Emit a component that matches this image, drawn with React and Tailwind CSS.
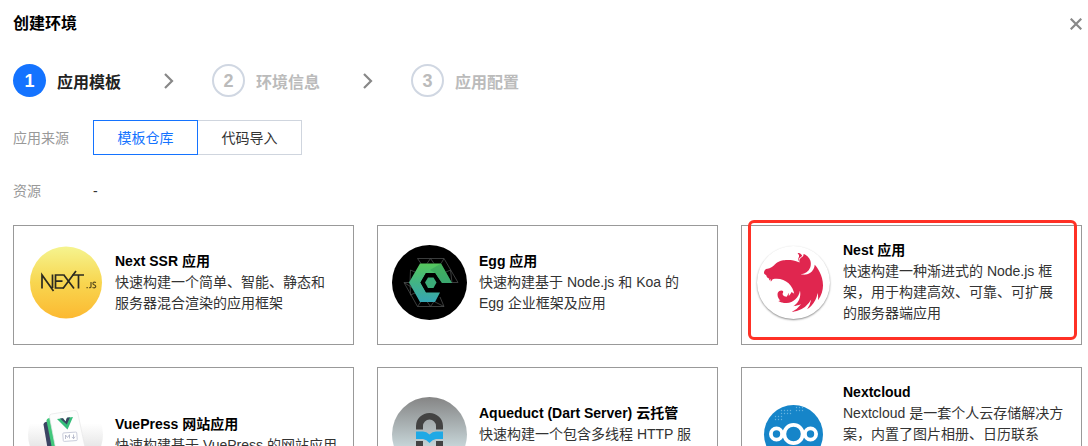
import React, { useState } from "react";
import { SiNestjs } from "react-icons/si";

function NextLogo() {
  return (
    <svg viewBox="0 0 75 75" className="size-[75px]" aria-hidden="true">
      <defs>
        <linearGradient id="next-bg" x1="0" y1="0" x2="0" y2="1">
          <stop offset="0" stopColor="#f5f48f" />
          <stop offset="0.5" stopColor="#f8d650" />
          <stop offset="1" stopColor="#fcb931" />
        </linearGradient>
      </defs>
      <circle cx="38" cy="37.500" r="36" fill="url(#next-bg)" />
      <g fill="none" stroke="#2b2a20" strokeWidth="1.7">
        <path d="M14 43.500V30L25.500 46M24.500 43V29.500" />
        <path d="M35.500 30H27.500V43H35.500M27.500 36.200H34.500" />
        <path d="M35.500 29.500L46 43.500M35 43.500L46.500 28L48 26" />
        <path d="M44.500 30H56M50.500 30V43.500" />
      </g>
      <g fill="none" stroke="#5a4c1c" strokeWidth="1.2">
        <path d="M58.500 42.600H59.800M63 37V41.500Q63 43 61 42.700M68 37.500Q64.800 36.500 64.900 38.500Q65 39.600 66.500 40Q68.200 40.800 67.500 42.200Q66.500 43.300 64.500 42.500" />
      </g>
    </svg>
  );
}

function EggLogo() {
  return (
    <svg viewBox="0 0 75 75" className="size-[75px]" aria-hidden="true">
      <defs>
        <linearGradient id="egg-fill" x1="0" y1="0" x2="0" y2="1">
          <stop offset="0" stopColor="#55c75c" />
          <stop offset="0.5" stopColor="#42b385" />
          <stop offset="1" stopColor="#36a6b4" />
        </linearGradient>
      </defs>
      <circle cx="37.500" cy="37.500" r="37.500" fill="#000" />
      <g fill="none" stroke="#4a4d4c" strokeWidth="0.8">
        <path d="M25.500 13.500H52L66 37.500H59M43 57L52 61.500H25.500L12 37.500Z" />
        <path d="M25.500 13.500L29 18.500M52 13.500L49 18.500M38.500 13.500L35 18.500M38.500 13.500L42 18.500M12 37.500H17M25.500 61.500L29 56.500M52 61.500L48 52M38.500 61.500L35 56.500M38.500 61.500L42 56.500M58.500 25L54 27M18.500 25L23 27M18.500 50L23 48M18.500 25L18 37L18.500 50M58.500 25L60 37.500" />
      </g>
      <path d="M28 18.500H49L60 38H50L43 28H34L28.500 37.500L34 47.500H48L43 57H28L17 37.500Z" fill="url(#egg-fill)" />
      <path d="M49 18.500L60 38H50L43 28L38 25Z" fill="#319a58" opacity="0.5" />
      <path d="M28.500 37.500L34 28H43L48.500 37.500L43 47H34Z" fill="#000" />
      <path d="M33 37.500L36 32.500H41.500L44.500 37.500L41.500 43H36Z" fill="#3bab78" />
    </svg>
  );
}

function NestLogo() {
  return (
    <span className="flex size-[75px] items-center justify-center">
      <span className="flex size-[73px] items-center justify-center rounded-full bg-white shadow-[0_1px_2px_rgba(0,0,0,0.45)]">
        <SiNestjs className="size-[59px] text-[#e0264f]" aria-hidden="true" />
      </span>
    </span>
  );
}

function VuePressLogo() {
  return (
    <svg viewBox="0 0 75 75" className="size-[75px]" aria-hidden="true">
      <defs>
        <linearGradient id="vue-bg" x1="0" y1="0" x2="0" y2="1">
          <stop offset="0.35" stopColor="#fff" />
          <stop offset="0.7" stopColor="#e4e4e4" />
        </linearGradient>
      </defs>
      <circle cx="37.500" cy="37.500" r="37.500" fill="url(#vue-bg)" />
      <g transform="translate(0 12.500)">
        <path d="M15.500 15Q15.500 13 17.500 12.500L24 11L32 52L22 53Z" fill="#3b4463" />
        <path d="M18.500 11Q18.500 9 21 8.500L27 7.500L36 53L27 54Z" fill="#42c87c" />
        <path d="M21.500 7.500Q21 5 23.500 4.500L46 1Q49 0.500 49.800 3.500L60 52L31 56Z" fill="#fdfdfd" stroke="#e6e6e8" strokeWidth="0.7" />
        <path d="M29 9.500L35 8.700L37.500 12L39 8.200L45 7.500L39.500 20Z" fill="#35bd7a" />
        <path d="M32 9.100L35 8.700L37.500 12L39 8.200L42 7.800L38.800 15Z" fill="#3b4463" />
        <rect x="35" y="23" width="14" height="8.500" rx="1" transform="rotate(-4 42 27)" fill="#fff" stroke="#bfc2d3" strokeWidth="0.8" />
        <path d="M37.500 29.500V25.500L39.500 28L41.500 25.200V29M45.500 25V29M43.800 27.400L45.600 29.200L47 27.200" fill="none" stroke="#a9adc2" strokeWidth="0.8" />
      </g>
    </svg>
  );
}

function AqueductLogo() {
  return (
    <svg viewBox="0 0 75 75" className="size-[75px]" aria-hidden="true">
      <defs>
        <linearGradient id="aqueduct-bg" x1="0" y1="0" x2="0" y2="1">
          <stop offset="0" stopColor="#858585" />
          <stop offset="0.65" stopColor="#c5d3d6" />
          <stop offset="1" stopColor="#dceaec" />
        </linearGradient>
      </defs>
      <circle cx="37.500" cy="37.500" r="37.500" fill="url(#aqueduct-bg)" />
      <path d="M24 32.500V29A13.500 13 0 0 1 51 29V32.500H44V29A6.500 6.500 0 0 0 31 29V32.500Z" fill="#434343" />
      <path d="M24 34.500H31Q34.500 34.500 37.500 37.500Q40.500 34.500 44 34.500H51V42H44Q40.500 42.500 37.500 46Q34.500 42.500 31 42H24Z" fill="#1fa9e5" />
      <path d="M24 44H31V60H24ZM44 44H51V60H44Z" fill="#434343" />
    </svg>
  );
}

function NextcloudLogo() {
  return (
    <svg viewBox="0 0 75 75" className="size-[75px]" aria-hidden="true">
      <defs>
        <pattern id="cloud-dots" width="3" height="3" patternUnits="userSpaceOnUse">
          <circle cx="1.500" cy="1.500" r="0.700" fill="#65b3df" />
        </pattern>
      </defs>
      <circle cx="37.500" cy="37.500" r="29.500" fill="#1685c9" />
      <path d="M24 12H36V18H27V24H18V18H24ZM39 9H48V15H39Z" fill="url(#cloud-dots)" />
      <g fill="none" stroke="#fff" strokeWidth="3.800">
        <circle cx="37.500" cy="37" r="9.200" />
        <circle cx="20.500" cy="37" r="5.600" />
        <circle cx="54.500" cy="37" r="5.600" />
      </g>
    </svg>
  );
}

const templates = [
  { name: "Next SSR 应用", text: "快速构建一个简单、智能、静态和服务器混合渲染的应用框架", Logo: NextLogo },
  { name: "Egg 应用", text: "快速构建基于 Node.js 和 Koa 的 Egg 企业框架及应用", Logo: EggLogo },
  {
    name: "Nest 应用",
    text: "快速构建一种渐进式的 Node.js 框架，用于构建高效、可靠、可扩展的服务器端应用",
    Logo: NestLogo,
    highlighted: true,
  },
  { name: "VuePress 网站应用", text: "快速构建基于 VuePress 的网站应用", Logo: VuePressLogo },
  {
    name: "Aqueduct (Dart Server) 云托管",
    text: "快速构建一个包含多线程 HTTP 服",
    Logo: AqueductLogo,
    textHeight: "min-h-[42px]",
  },
  {
    name: "Nextcloud",
    text: "Nextcloud 是一套个人云存储解决方案，内置了图片相册、日历联系",
    Logo: NextcloudLogo,
    textHeight: "min-h-[84px]",
  },
];

const steps = ["应用模板", "环境信息", "应用配置"];
const sources = ["模板仓库", "代码导入"];

function TemplateCard({ name, text, Logo, highlighted, textHeight = "" }) {
  return (
    <li className="relative flex items-center gap-3 border border-[#999] bg-white pt-3.5 pr-4 pb-5 pl-3.5">
      <div className="my-1 shrink-0">
        <Logo />
      </div>
      <div className="min-w-0 flex-1 leading-[21px]">
        <h2 className="font-bold text-black">{name}</h2>
        <p className={textHeight}>{text}</p>
      </div>
      {highlighted && (
        <span className="pointer-events-none absolute -top-1.5 right-1 bottom-1 left-1.5 rounded-md border-3 border-[#ff3126]" />
      )}
    </li>
  );
}

export default function App() {
  const [source, setSource] = useState(0);
  return (
    <main className="h-screen overflow-hidden bg-white pr-1.5 pl-[13px] font-['Liberation_Sans','Noto_Sans_CJK_SC',sans-serif] text-sm text-[#333]">
      <header className="flex items-center justify-between pt-3">
        <h1 className="text-base leading-6 font-bold text-black">创建环境</h1>
        <button type="button" aria-label="关闭" className="flex size-3 items-center justify-center text-[#888]">
          <svg viewBox="0 0 12 12" className="size-3" fill="none" stroke="currentColor" strokeWidth="2.2" aria-hidden="true">
            <path d="M0.700 0.700L11.300 11.300M11.300 0.700L0.700 11.300" />
          </svg>
        </button>
      </header>

      <ol className="mt-7 flex items-center text-base font-bold">
        {steps.map((label, i) => (
          <li key={label} className="flex items-center">
            {i > 0 && (
              <svg viewBox="0 0 10 16" className="mr-[38px] ml-[43px] h-4 w-2.5" fill="none" stroke="#888" strokeWidth="2.2" aria-hidden="true">
                <path d="M1 1L8 8L1 15" />
              </svg>
            )}
            <span
              className={
                i === 0
                  ? "flex size-[33px] items-center justify-center rounded-full bg-[#1473ff] text-lg text-white"
                  : "flex size-[33px] items-center justify-center rounded-full border-2 border-[#d0d7e2] text-lg text-[#bbb]"
              }
            >
              {i + 1}
            </span>
            <span className={i === 0 ? "ml-[11px] pt-1 text-[#222]" : "ml-[11px] pt-1 text-[#bbb]"}>{label}</span>
          </li>
        ))}
      </ol>

      <div className="mt-[23px] flex items-center">
        <span id="source-label" className="w-20 text-[#999]">应用来源</span>
        <div role="group" aria-labelledby="source-label" className="flex">
          {sources.map((label, i) => (
            <button
              key={label}
              type="button"
              aria-pressed={source === i}
              onClick={() => setSource(i)}
              className={
                source === i
                  ? "relative -mr-px h-[35px] w-[105px] border border-[#1473ff] text-[#1473ff]"
                  : "-mr-px h-[35px] w-[105px] border border-[#cfd5de] text-[#333]"
              }
            >
              {label}
            </button>
          ))}
        </div>
      </div>

      <div className="mt-[26px] flex items-center leading-[21px]">
        <span className="w-20 text-[#999]">资源</span>
        <span>-</span>
      </div>

      <ul className="mt-[23px] grid grid-cols-3 gap-x-[23px] gap-y-[22px]">
        {templates.map((item) => (
          <TemplateCard key={item.name} {...item} />
        ))}
      </ul>
    </main>
  );
}
